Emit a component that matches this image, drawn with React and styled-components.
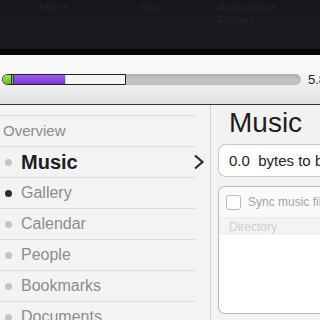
import React from "react";
import styled, { createGlobalStyle } from "styled-components";

const Global = createGlobalStyle`
  html, body { margin: 0; padding: 0; background: #f2f2f2; }
  body { font-family: "Liberation Sans", Arial, sans-serif; overflow: hidden; }
  * { box-sizing: border-box; }
`;

const Page = styled.div`
  width: 320px;
  height: 320px;
  overflow: hidden;
  display: flex;
  flex-direction: column;
  background: #f2f2f2;
`;

const Header = styled.div`
  height: 49px;
  flex: none;
  background: linear-gradient(#16171b, #1a1b1f);
  display: flex;
  gap: 40px;
  padding: 0 0 0 40px;
  border-bottom: 6px solid #050505;
  box-sizing: content-box;
`;

const NavText = styled.div`
  color: #23242a;
  font-size: 11px;
  line-height: 13px;
  padding-top: 1px;
`;

const StorageBar = styled.div`
  height: 50px;
  flex: none;
  background: linear-gradient(#fbfbfb, #f6f6f6 40%, #e2e2e2);
  border-bottom: 1px solid #333;
  display: flex;
  align-items: center;
  padding: 0 0 0 2px;
  gap: 7px;
`;

const Track = styled.div`
  width: 299px;
  height: 11px;
  border-radius: 6px;
  background: linear-gradient(#b0b0b0, #c4c4c4 60%, #bcbcbc);
  display: flex;
  flex: none;
  overflow: hidden;
`;

const Used = styled.div`
  width: 124px;
  height: 11px;
  display: flex;
  border: 1px solid #222;
  border-radius: 6px 0 0 6px;
  overflow: hidden;
  background: #f4f4f4;
`;

const Seg = styled.div`
  height: 100%;
  width: ${(p) => p.$w}px;
  background: ${(p) => p.$c};
  flex: none;
`;

const Total = styled.div`
  font-size: 13px;
  color: #222;
  white-space: nowrap;
`;

const Main = styled.div`
  flex: 1;
  display: flex;
  min-height: 0;
`;

const Sidebar = styled.div`
  width: 211px;
  flex: none;
  border-right: 1px solid #d4d4d4;
  padding-top: 10px;
  background: #f3f3f3;
`;

const Item = styled.div`
  width: 195px;
  height: 31px;
  border-top: 1px solid #dcdcdc;
  display: flex;
  align-items: center;
  padding-left: ${(p) => (p.$head ? 3 : 5)}px;
  position: relative;
`;

const Dot = styled.span`
  width: 7px;
  height: 7px;
  border-radius: 50%;
  background: ${(p) => (p.$on ? "#2e2e2e" : "#c4c4c4")};
  margin-right: 9px;
  flex: none;
`;

const Label = styled.span`
  font-size: ${(p) => (p.$active ? 20 : p.$head ? 15 : 16)}px;
  font-weight: ${(p) => (p.$active ? 700 : 400)};
  color: ${(p) => (p.$active ? "#1e1e1e" : "#8c8c8c")};
  flex: 1;
  white-space: nowrap;
  margin-top: ${(p) => (p.$head ? -2 : 0)}px;
`;

const Chevron = styled.svg`
  width: 12px;
  height: 16px;
  margin-right: -10px;
`;

const Content = styled.div`
  flex: 1;
  padding: 1px 0 0 7px;
  display: flex;
  flex-direction: column;
  overflow: hidden;
`;

const Title = styled.div`
  font-size: 28px;
  color: #1e1e1e;
  padding-left: 11px;
  line-height: 34px;
  height: 38px;
`;

const Input = styled.div`
  height: 33px;
  width: 140px;
  border: 1px solid #c8c8c8;
  border-right: none;
  border-radius: 8px 0 0 8px;
  background: #fff;
  font-size: 15px;
  color: #222;
  display: flex;
  align-items: center;
  padding-left: 10px;
  white-space: pre;
  overflow: hidden;
`;

const Box = styled.div`
  margin-top: 9px;
  width: 140px;
  height: 128px;
  border: 1px solid #b8b8b8;
  border-right: none;
  border-radius: 7px 0 0 7px;
  background: #fff;
  overflow: hidden;
`;

const BoxHead = styled.div`
  height: 31px;
  display: flex;
  align-items: center;
  padding-left: 7px;
  gap: 7px;
  border-bottom: 1px solid #ececec;
  background: #fafafa;
`;

const Check = styled.span`
  width: 15px;
  height: 15px;
  border: 1px solid #bbb;
  border-radius: 3px;
  background: #fff;
  flex: none;
`;

const BoxText = styled.span`
  font-size: 12px;
  color: #a3a3a3;
  white-space: nowrap;
`;

const DirRow = styled.div`
  height: 17px;
  background: #f3f3f3;
  font-size: 12px;
  color: #cfcfcf;
  padding-left: 10px;
  display: flex;
  align-items: center;
`;

const items = [
  { label: "Music", active: true },
  { label: "Gallery", on: true },
  { label: "Calendar" },
  { label: "People" },
  { label: "Bookmarks" },
  { label: "Documents" },
];

export default function App() {
  return (
    <Page>
      <Global />
      <Header>
        <NavText>Home</NavText>
        <NavText style={{ marginLeft: 30 }}>Info</NavText>
        <NavText style={{ marginLeft: 20 }}>Applications<br />Folders</NavText>
      </Header>
      <StorageBar>
        <Track>
          <Used>
            <Seg $w={8} $c="linear-gradient(#a6e04a,#6fb81d)" />
            <Seg $w={1} $c="#1b4b3c" />
            <Seg $w={1} $c="#6fb81d" />
            <Seg $w={1} $c="#1b4b3c" />
            <Seg $w={51} $c="linear-gradient(#9a5ee8,#7b36d6)" />
            <Seg $w={1} $c="#ccc" />
          </Used>
        </Track>
        <Total>5.8 GB</Total>
      </StorageBar>
      <Main>
        <Sidebar>
          <Item $head>
            <Label $head>Overview</Label>
          </Item>
          {items.map((it) => (
            <Item key={it.label}>
              <Dot $on={it.on} />
              <Label $active={it.active}>{it.label}</Label>
              {it.active && (
                <Chevron viewBox="0 0 12 16">
                  <path d="M2 1.5 L9.5 8 L2 14.5" fill="none" stroke="#2a2a2a" strokeWidth="2.2" />
                </Chevron>
              )}
            </Item>
          ))}
        </Sidebar>
        <Content>
          <Title>Music</Title>
          <Input>{"0.0  bytes to be synced"}</Input>
          <Box>
            <BoxHead>
              <Check />
              <BoxText>Sync music files</BoxText>
            </BoxHead>
            <DirRow>Directory</DirRow>
          </Box>
        </Content>
      </Main>
    </Page>
  );
}
